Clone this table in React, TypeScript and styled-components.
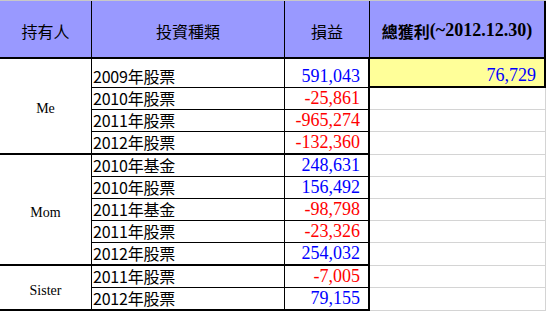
import styled, { createGlobalStyle } from "styled-components"

const GlobalStyle = createGlobalStyle`
  html, body {
    margin: 0;
    padding: 0;
    background: #ffffff;
  }
`

const Sheet = styled.div`
  display: grid;
  grid-template-columns: 92px 193px 85px 176px;
  grid-template-rows: 58px 29px 22px 22px 23px 22px 22px 22px 22px 23px 22px 23px;
  width: 546px;
  border-top: 1px solid #c8c8c8;
  font-family: "Noto Sans CJK TC", "Liberation Sans", sans-serif;
  color: #000000;
`

const HeaderCell = styled.div<{ $last?: boolean }>`
  box-sizing: border-box;
  display: flex;
  align-items: center;
  justify-content: center;
  padding-top: 3px;
  background: #9999ff;
  border-bottom: 2px solid #000000;
  border-right: ${(p) => (p.$last ? "2px" : "1px")} solid #000000;
  font-size: 16px;
  font-weight: ${(p) => (p.$last ? "bold" : "normal")};
  white-space: nowrap;
`

const Latin = styled.span`
  font-family: "Liberation Serif", serif;
  font-size: 18px;
`

const OwnerCell = styled.div<{ $span: number }>`
  box-sizing: border-box;
  grid-row: span ${(p) => p.$span};
  display: flex;
  align-items: center;
  justify-content: center;
  padding-top: 6px;
  border-right: 1px solid #000000;
  border-bottom: 2px solid #000000;
  font-family: "Liberation Serif", serif;
  font-size: 14px;
`

const TypeCell = styled.div<{ $end?: boolean }>`
  box-sizing: border-box;
  display: flex;
  align-items: flex-end;
  padding: 0 0 1px 1px;
  border-right: 1px solid #000000;
  border-bottom: ${(p) => (p.$end ? "2px" : "1px")} solid #000000;
  font-size: 16px;
  line-height: 20px;
  letter-spacing: -0.2px;
  white-space: nowrap;
`

const AmountCell = styled.div<{ $end?: boolean; $neg: boolean }>`
  box-sizing: border-box;
  display: flex;
  align-items: flex-end;
  justify-content: flex-end;
  padding: 0 8px 1px 0;
  border-right: 2px solid #000000;
  border-bottom: ${(p) => (p.$end ? "2px" : "1px")} solid #000000;
  font-family: "Liberation Serif", serif;
  font-size: 18px;
  line-height: 20px;
  color: ${(p) => (p.$neg ? "#ff0000" : "#0000ff")};
`

const TotalCell = styled.div`
  box-sizing: border-box;
  display: flex;
  align-items: flex-end;
  justify-content: flex-end;
  padding: 0 8px 1px 0;
  background: #ffff99;
  border-right: 2px solid #000000;
  border-bottom: 2px solid #000000;
  font-family: "Liberation Serif", serif;
  font-size: 18px;
  line-height: 20px;
  color: #0000ff;
`

const BlankCell = styled.div`
  box-sizing: border-box;
  border-right: 1px solid #d4d4d4;
  border-bottom: 1px solid #d4d4d4;
`

const groups = [
  {
    owner: "Me",
    items: [
      ["2009年股票", 591043],
      ["2010年股票", -25861],
      ["2011年股票", -965274],
      ["2012年股票", -132360],
    ],
  },
  {
    owner: "Mom",
    items: [
      ["2010年基金", 248631],
      ["2010年股票", 156492],
      ["2011年基金", -98798],
      ["2011年股票", -23326],
      ["2012年股票", 254032],
    ],
  },
  {
    owner: "Sister",
    items: [
      ["2011年股票", -7005],
      ["2012年股票", 79155],
    ],
  },
] as { owner: string; items: [string, number][] }[]

const fmt = (n: number) => n.toLocaleString("en-US")

const App = () => {
  const total = groups.reduce(
    (sum, g) => sum + g.items.reduce((s, [, v]) => s + v, 0),
    0
  )
  let rowIndex = 0

  return (
    <>
      <GlobalStyle />
      <Sheet>
        <HeaderCell>持有人</HeaderCell>
        <HeaderCell>投資種類</HeaderCell>
        <HeaderCell>損益</HeaderCell>
        <HeaderCell $last>
          總獲利<Latin>(~2012.12.30)</Latin>
        </HeaderCell>
        {groups.map((g) =>
          g.items.map(([label, value], i) => {
            const end = i === g.items.length - 1
            const first = rowIndex === 0
            rowIndex++
            return [
              i === 0 ? (
                <OwnerCell key={g.owner} $span={g.items.length}>
                  {g.owner}
                </OwnerCell>
              ) : null,
              <TypeCell key={g.owner + label + "t"} $end={end}>
                {label}
              </TypeCell>,
              <AmountCell key={g.owner + label + "a"} $end={end} $neg={value < 0}>
                {fmt(value)}
              </AmountCell>,
              first ? (
                <TotalCell key="total">{fmt(total)}</TotalCell>
              ) : (
                <BlankCell key={g.owner + label + "b"} />
              ),
            ]
          })
        )}
      </Sheet>
    </>
  )
}

export default App
